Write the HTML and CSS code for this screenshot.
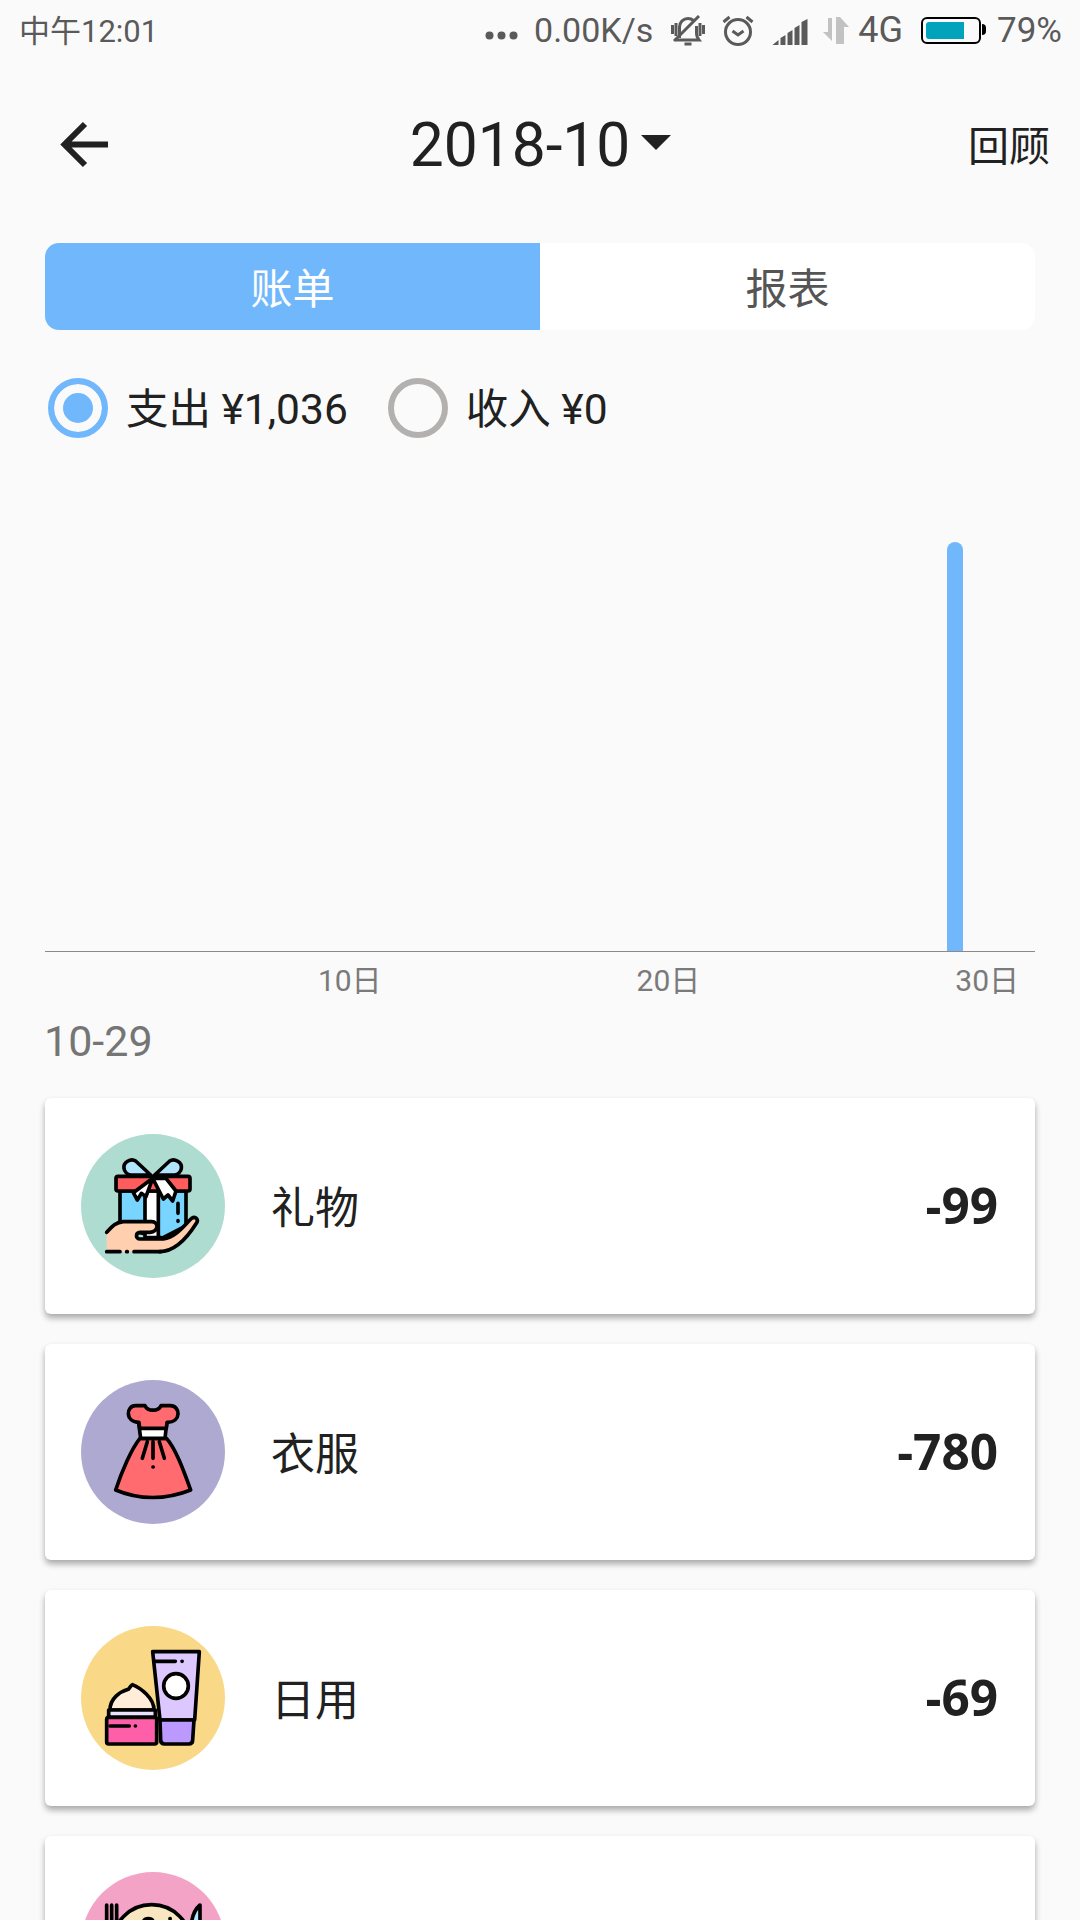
FILE: index.html
```html
<!DOCTYPE html>
<html lang="zh">
  <head>
    <meta charset="UTF-8" />
    <title>账单</title>
    <link rel="stylesheet" href="styles.css">
  </head>
  <body>
    <div class="statusbar">
      <span class="time">中午12:01</span>
      <div class="status-right">
        <svg class="dots" viewBox="0 0 33 9"><circle cx="4.500" cy="4.500" r="4"/><circle cx="16.500" cy="4.500" r="4"/><circle cx="28.500" cy="4.500" r="4"/></svg>
        <span class="speed">0.00K/s</span>
        <svg class="ic-bell" viewBox="0 0 34 31"><path d="M8.500 23V12c0-5 4-8.500 8.500-8.500 2 0 4 .7 5.500 2M25.500 11v8c0 2 1 4 2.500 6H5"/><path d="M13.500 29h7"/><path d="M28 1L3 26"/><path d="M1.500 10v9M5 8v13M29 8v13M32.500 10v9"/></svg>
        <svg class="ic-clock" viewBox="0 0 32 32"><circle cx="16" cy="18" r="12.500"/><path d="M10.500 17l5.500 4 5.500-4"/><path d="M1.500 8l6-5M30.500 8l-6-5"/></svg>
        <svg class="ic-signal" viewBox="0 0 36 26"><path d="M0 26l6-5v5zM8 19l5-3v10H8zM15 14l5-3v15h-5zM22 9l5-3v20h-5zM29 3l6-3v26h-6z"/></svg>
        <svg class="ic-data" viewBox="0 0 26 28"><path d="M9 1v23l-9-9h5V1zM13 0h4l9 10h-5v17h-8z"/></svg>
        <span class="net">4G</span>
        <div class="battery"><div class="battery-fill"></div></div>
        <span class="pct">79%</span>
      </div>
    </div>

    <div class="topbar">
      <svg class="back" viewBox="0 0 48 48"><path d="M48 23.500H6M25 3L4.500 23.500 25 44" /></svg>
      <div class="month">2018-10<span class="caret"></span></div>
      <span class="review">回顾</span>
    </div>

    <div class="tabs">
      <div class="tab active">账单</div>
      <div class="tab">报表</div>
    </div>

    <div class="radios">
      <div class="radio checked"><span class="dot"></span><span class="radio-text">支出 ¥1,036</span></div>
      <div class="radio"><span class="dot"></span><span class="radio-text">收入 ¥0</span></div>
    </div>

    <div class="chart">
      <div class="bars">
        <div class="bar"></div>
      </div>
      <div class="labels">
        <span class="d10">10日</span>
        <span class="d20">20日</span>
        <span class="d30">30日</span>
      </div>
    </div>

    <div class="date">10-29</div>

    <div class="card">
      <div class="avatar green">
        <svg viewBox="63 72 432 432">
          <g stroke="#000" stroke-width="11" stroke-linejoin="round" stroke-linecap="round">
            <path d="M180 243h198v105l-70 36-128-30z" fill="#78d5ff"/>
            <path d="M255 243h40v140h-40z" fill="#fff"/>
            <path d="M272 195l-45-42c-15-10-38 5-35 22 1 10 10 18 20 20z" fill="#b0e4ff"/>
            <path d="M284 195l45-42c15-10 38 5 35 22-1 10-10 18-20 20z" fill="#b0e4ff"/>
            <rect x="168" y="199" width="222" height="44" rx="6" fill="#ff5d5d"/>
            <path d="M278 205l-20 55-14-10-12 20-12-22z" fill="#fff"/>
            <path d="M278 205l32 62 14-12 14 18 10-30-30-38z" fill="#fff"/>
            <path d="M354 280v30M354 332v2" fill="none"/>
            <path d="M140 367c14-15 25-30 50-32h85c22 0 22 30-5 32h-30c-14 0-14 20 0 20h70c40-5 70-50 85-62 12-8 22 4 14 15-25 40-60 85-110 85H140z" fill="#ffcfb0" stroke="none"/>
            <path d="M140 367c14-15 25-30 50-32h85c22 0 22 30-5 32h-30c-14 0-14 20 0 20h70c40-5 70-50 85-62 12-8 22 4 14 15-25 40-60 85-110 85" fill="none"/>
            <path d="M140 425h40M200 425h2M222 425h80" fill="none"/>
          </g>
        </svg>
      </div>
      <span class="name">礼物</span>
      <span class="amount">-99</span>
    </div>

    <div class="card">
      <div class="avatar purple">
        <svg viewBox="63 60 432 432">
          <g stroke="#000" stroke-width="11" stroke-linejoin="round" stroke-linecap="round">
            <path d="M240 235c-25 30-55 100-73 155 70 30 150 30 225 0-20-55-45-125-73-155z" fill="#ff6b6e"/>
            <path d="M236 190h84l-5 45h-73z" fill="#fff"/>
            <path d="M255 137c8 18 40 18 48 0h28c30 0 35 50-10 50l-2 18h-80l-2-18c-42 0-40-50-10-50z" fill="#ff6b6e"/>
            <path d="M262 245l-15 50M279 245v50M298 245l15 50" fill="none"/>
            <path d="M279 321h.5" fill="none"/>
          </g>
        </svg>
      </div>
      <span class="name">衣服</span>
      <span class="amount">-780</span>
    </div>

    <div class="card">
      <div class="avatar yellow">
        <svg viewBox="63 78 432 432">
          <g stroke="#000" stroke-width="11" stroke-linejoin="round" stroke-linecap="round">
            <path d="M278 155h140l-14 205H300z" fill="#dcc8ff"/>
            <path d="M300 360h102l-4 60c0 8-4 12-12 12h-72c-8 0-12-4-12-12z" fill="#bb99ff"/>
            <path d="M286 184h60M366 184h.5" fill="none"/>
            <circle cx="348" cy="258" r="37" fill="#fff"/>
            <path d="M150 330c0-35 30-55 55-62 5-5 8-13 12-14 25 10 65 40 65 76z" fill="#ffecd9"/>
            <rect x="146" y="330" width="140" height="22" fill="#ebe1ff"/>
            <rect x="140" y="352" width="150" height="80" rx="6" fill="#ff5fa8"/>
            <path d="M150 378h58M226 378h.5" fill="none"/>
          </g>
        </svg>
      </div>
      <span class="name">日用</span>
      <span class="amount">-69</span>
    </div>

    <div class="card">
      <div class="avatar pink">
        <svg viewBox="3 6 432 432">
          <g stroke="#000" stroke-width="11" stroke-linejoin="round" stroke-linecap="round">
            <path d="M80 105v60M95 105v60M110 105v60" fill="none"/>
            <circle cx="215" cy="222" r="118" fill="#f7e6c0"/>
            <path d="M190 155c5-12 25-12 30 0" fill="none"/>
            <path d="M270 146h.5" fill="none"/>
            <path d="M360 105c-14 12-24 30-26 60h26z" fill="#b0e4ff"/>
          </g>
        </svg>
      </div>
    </div>
  </body>
</html>
```

FILE: styles.css
```css
html,
body {
  margin: 0;
  padding: 0;
}
body {
  width: 1080px;
  height: 1920px;
  overflow: hidden;
  background-color: #fafafa;
  font-family: Roboto, "Noto Sans CJK SC", sans-serif;
  color: #212121;
}

/* status bar */
.statusbar {
  height: 60px;
  padding: 0 18px 0 19px;
  display: flex;
  align-items: center;
  justify-content: space-between;
  color: #5a5a5a;
  font-size: 34px;
}
.time {
  margin-bottom: 3px;
  font-size: 31px;
}
.status-right {
  display: flex;
  align-items: center;
}
.status-right svg {
  display: block;
}
.dots {
  width: 33px;
  height: 9px;
  margin: 10px 16px 0 0;
  fill: #5a5a5a;
}
.ic-bell {
  width: 34px;
  height: 31px;
  margin: 0 0 0 18px;
  fill: none;
  stroke: #5a5a5a;
  stroke-width: 3;
}
.ic-clock {
  width: 32px;
  height: 32px;
  margin-left: 17px;
  fill: none;
  stroke: #5a5a5a;
  stroke-width: 3;
}
.ic-signal {
  width: 37px;
  height: 26px;
  margin: 4px 0 0 18px;
  fill: #5a5a5a;
}
.ic-data {
  width: 26px;
  height: 28px;
  margin: 2px 0 0 14px;
  fill: #c2c2c2;
}
.net {
  margin-left: 9px;
  font-size: 36px;
}
.battery {
  position: relative;
  box-sizing: border-box;
  width: 60px;
  height: 27px;
  margin-left: 18px;
  padding: 3px;
  border: 2px solid #000;
  border-radius: 6px;
}
.battery::after {
  content: "";
  position: absolute;
  top: 5px;
  right: -7px;
  width: 4px;
  height: 11px;
  background-color: #000;
  border-radius: 0 4px 4px 0;
}
.battery-fill {
  width: 38px;
  height: 100%;
  background-color: #00a3bb;
  border-radius: 3px 0 0 3px;
}
.pct {
  margin-left: 16px;
  font-size: 35px;
}

/* title row */
.topbar {
  height: 170px;
  padding: 0 30px 0 60px;
  display: flex;
  align-items: center;
  justify-content: space-between;
}
.back {
  width: 48px;
  height: 48px;
  fill: none;
  stroke: #212121;
  stroke-width: 6;
}
.month {
  display: flex;
  align-items: center;
  font-size: 60.500px;
  margin-left: 5px;
}
.caret {
  width: 0;
  height: 0;
  margin-left: 11px;
  margin-bottom: 6px;
  border-left: 15px solid transparent;
  border-right: 15px solid transparent;
  border-top: 15px solid #212121;
}
.review {
  margin-bottom: 5px;
  font-size: 41px;
}

/* tabs */
.tabs {
  display: flex;
  height: 87px;
  margin: 13px 45px 0;
  border-radius: 14px;
  overflow: hidden;
  background-color: #fff;
}
.tab {
  flex: 1;
  display: flex;
  align-items: center;
  justify-content: center;
  padding-bottom: 2px;
  font-size: 42px;
  color: #555;
}
.tab.active {
  background-color: #71b7fc;
  color: #fff;
}

/* radios */
.radios {
  display: flex;
  align-items: center;
  margin: 48px 0 0 48px;
  font-size: 42.500px;
}
.radio {
  display: flex;
  align-items: center;
  margin-right: 40px;
}
.radio-text {
  margin-top: 4px;
  line-height: 52px;
}
.dot {
  box-sizing: border-box;
  width: 60px;
  height: 60px;
  margin-right: 18px;
  border: 6px solid #b3b1af;
  border-radius: 50%;
}
.radio.checked .dot {
  border-color: #71b7fc;
  background-color: #71b7fc;
  box-shadow: inset 0 0 0 9px #fafafa;
}

/* chart */
.chart {
  margin: 0 45px;
}
.bars {
  display: grid;
  grid-template-columns: repeat(31, minmax(0, 1fr));
  align-items: end;
  height: 513px;
  border-bottom: 1px solid #8a8a8a;
}
.bar {
  grid-column: 29;
  justify-self: center;
  width: 16px;
  height: 409px;
  background-color: #71b7fc;
  border-radius: 8px 8px 0 0;
}
.labels {
  display: grid;
  grid-template-columns: repeat(31, minmax(0, 1fr));
  margin-top: 11px;
  padding-left: 2px;
  font-size: 30px;
  line-height: 36px;
  color: #7a7a7a;
  text-align: center;
}
.d10 {
  grid-column: 9 / span 3;
}
.d20 {
  grid-column: 19 / span 3;
}
.d30 {
  grid-column: 29 / span 3;
}

.date {
  margin: 18px 0 0 44px;
  font-size: 43px;
  line-height: 48px;
  color: #757575;
}

/* cards */
.card {
  display: flex;
  align-items: center;
  box-sizing: border-box;
  height: 216px;
  margin: 0 45px 30px;
  padding: 0 37px 0 36px;
  background-color: #fff;
  border-radius: 6px;
  box-shadow: 0 4px 6px rgba(0, 0, 0, 0.33);
}
.date + .card {
  margin-top: 33px;
}
.avatar {
  width: 144px;
  height: 144px;
  border-radius: 50%;
  overflow: hidden;
  flex: none;
}
.avatar svg {
  display: block;
  width: 144px;
  height: 144px;
}
.green {
  background-color: #aedcd0;
}
.purple {
  background-color: #aea9d1;
}
.yellow {
  background-color: #f9d987;
}
.pink {
  background-color: #f3a4c6;
}
.name {
  margin-left: 46px;
  padding-bottom: 2px;
  font-size: 44px;
}
.amount {
  margin-left: auto;
  padding-bottom: 2px;
  font-family: "Open Sans", "Noto Sans", sans-serif;
  font-weight: 700;
  font-size: 49.500px;
}
```
